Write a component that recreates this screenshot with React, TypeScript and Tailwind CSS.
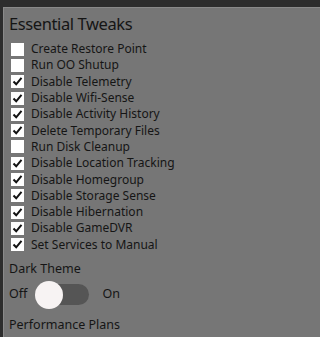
import React from "react";

const items: [string, boolean][] = [
  ["Create Restore Point", false],
  ["Run OO Shutup", false],
  ["Disable Telemetry", true],
  ["Disable Wifi-Sense", true],
  ["Disable Activity History", true],
  ["Delete Temporary Files", true],
  ["Run Disk Cleanup", false],
  ["Disable Location Tracking", true],
  ["Disable Homegroup", true],
  ["Disable Storage Sense", true],
  ["Disable Hibernation", true],
  ["Disable GameDVR", true],
  ["Set Services to Manual", true],
];

function Box({ checked }: { checked: boolean }) {
  return (
    <div className="w-[13px] h-[13px] bg-white flex items-center justify-center shrink-0">
      {checked && (
        <svg width="11" height="11" viewBox="0 0 11 11">
          <path d="M1.5 5.5 L4.2 8.3 L9.5 1.8" fill="none" stroke="#111" strokeWidth="2" />
        </svg>
      )}
    </div>
  );
}

export default function App() {
  return (
    <div
      className="w-full min-w-[274px] h-screen min-h-[337px] bg-[#2d2d2d] pt-[7px] pl-[3px] overflow-hidden"
      style={{ fontFamily: '"Noto Sans", sans-serif' }}
    >
      <div className="h-full bg-[#767676] border-t border-l border-[#8a8a8a] text-[#151515] pl-[5px] pt-[4px]">
        <div className="text-[16.5px] leading-[24px] tracking-[-0.4px]">Essential Tweaks</div>
        <div className="flex flex-col mt-[5px]">
          {items.map(([t, c]) => (
            <div key={t} className="flex items-center h-[16.3px] pl-[2px]">
              <Box checked={c} />
              <span className="ml-[7px] text-[12px] leading-[16px]">{t}</span>
            </div>
          ))}
        </div>
        <div className="text-[12.5px] leading-[16px] mt-[8px]">Dark Theme</div>
        <div className="flex items-center mt-[4px] h-[28px]">
          <span className="text-[12.5px]">Off</span>
          <div className="relative ml-[8px] w-[54px] h-[21px] rounded-full bg-[#555555]">
            <div className="absolute left-0 top-[-3.5px] w-[28px] h-[28px] rounded-full bg-[#f7f3f3]" />
          </div>
          <span className="ml-[13px] text-[12.5px]">On</span>
        </div>
        <div className="text-[12.5px] leading-[16px] mt-[8px]">Performance Plans</div>
      </div>
    </div>
  );
}
